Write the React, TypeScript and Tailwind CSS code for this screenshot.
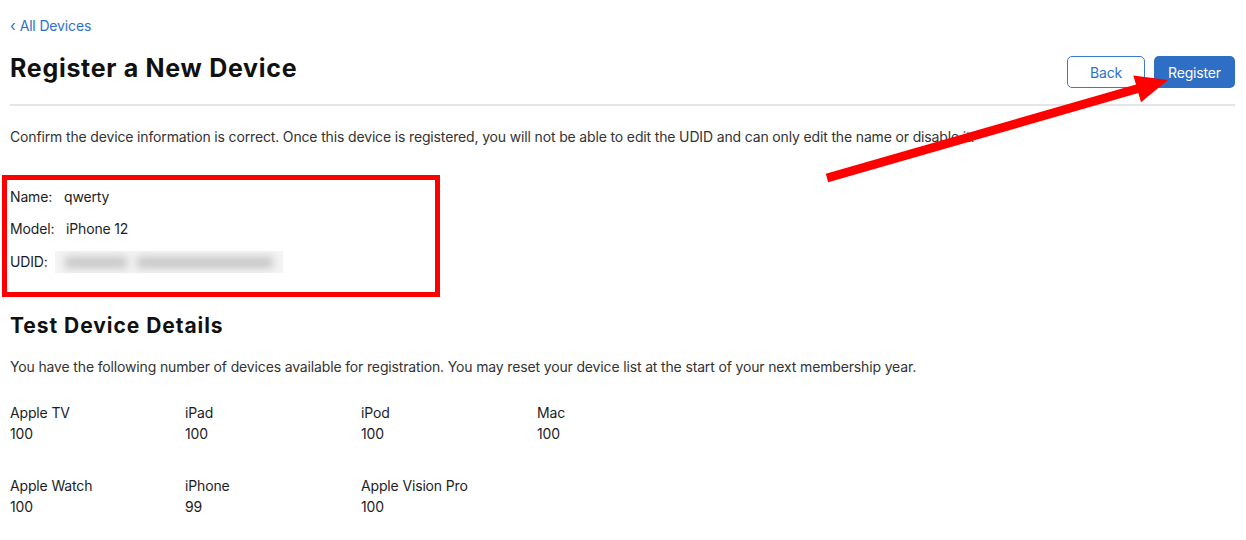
import React from "react";

const font = { fontFamily: "Inter, 'Noto Sans', 'Liberation Sans', sans-serif" };

function Arrow() {
  return (
    <svg className="absolute left-0 top-0 pointer-events-none" width="1246" height="540" viewBox="0 0 1246 540">
      <polygon
        fill="#ff0000"
        points="825.8,173.7 1136,84.5 1133.3,75.4 1168,80 1141,102.3 1138.4,93.1 828.2,182.3"
      />
    </svg>
  );
}

function Stat({ label, value }: { label: string; value: string }) {
  return (
    <div className="flex flex-col">
      <span className="text-[14px] leading-[21px] text-[#1d1d1f]">{label}</span>
      <span className="text-[14px] leading-[21px] text-[#1d1d1f]">{value}</span>
    </div>
  );
}

export default function App() {
  return (
    <div className="relative w-[1246px] h-[540px] bg-white overflow-hidden tracking-[-0.15px]" style={font}>
      <div className="pl-[10px] pr-[11px]">
        <div className="pt-[15px] h-[36px] text-[14px] leading-[20px] text-[#2f6fcc] flex items-center gap-[4px]">
          <span className="text-[15px]">‹</span>
          <span>All Devices</span>
        </div>
        <div className="flex items-start justify-between h-[68px]">
          <h1 className="mt-[16px] text-[25px] leading-[32px] font-bold text-[#111111] tracking-[0.7px]">Register a New Device</h1>
          <div className="flex gap-[9px] mt-[20px]">
            <button className="w-[78px] h-[32px] rounded-[5px] border border-[#3b78d0] text-[#2f6fcc] text-[14px] bg-white">Back</button>
            <button className="w-[81px] h-[32px] rounded-[5px] bg-[#2e6ec4] text-white text-[14px]">Register</button>
          </div>
        </div>
        <div className="h-[2px] bg-[#e5e5e5]" />
        <p className="mt-[21px] text-[14px] leading-[20px] text-[#333333]">
          Confirm the device information is correct. Once this device is registered, you will not be able to edit the UDID and can only edit the name or disable it.
        </p>
        <div className="mt-[40px] flex flex-col gap-[12px] text-[14px] leading-[20px] text-[#1d1d1f]">
          <div className="flex">
            <span className="w-[54px]">Name:</span>
            <span>qwerty</span>
          </div>
          <div className="flex">
            <span className="w-[56px]">Model:</span>
            <span>iPhone 12</span>
          </div>
          <div className="flex items-center">
            <span className="w-[43px]">UDID:</span>
            <div className="relative ml-[2px] w-[228px] h-[22px] bg-[#f4f4f4] overflow-hidden">
              <div className="absolute left-[10px] top-[6px] w-[62px] h-[11px] bg-[#c4c4c4] blur-[4px]" />
              <div className="absolute left-[82px] top-[6px] w-[136px] h-[11px] bg-[#c4c4c4] blur-[4px]" />
            </div>
          </div>
        </div>
        <h2 className="mt-[40px] text-[21px] font-bold text-[#111111] leading-[26px] tracking-[0.95px]">Test Device Details</h2>
        <p className="mt-[18px] text-[14px] leading-[20px] text-[#333333]">
          You have the following number of devices available for registration. You may reset your device list at the start of your next membership year.
        </p>
        <div className="mt-[25px] grid grid-cols-[175px_176px_176px_175px] gap-y-[31px] w-[702px]">
          <Stat label="Apple TV" value="100" />
          <Stat label="iPad" value="100" />
          <Stat label="iPod" value="100" />
          <Stat label="Mac" value="100" />
          <Stat label="Apple Watch" value="100" />
          <Stat label="iPhone" value="99" />
          <Stat label="Apple Vision Pro" value="100" />
        </div>
      </div>
      <div className="absolute left-[2px] top-[175px] w-[438px] h-[122px] border-[5px] border-[#ff0000] pointer-events-none" />
      <Arrow />
    </div>
  );
}
